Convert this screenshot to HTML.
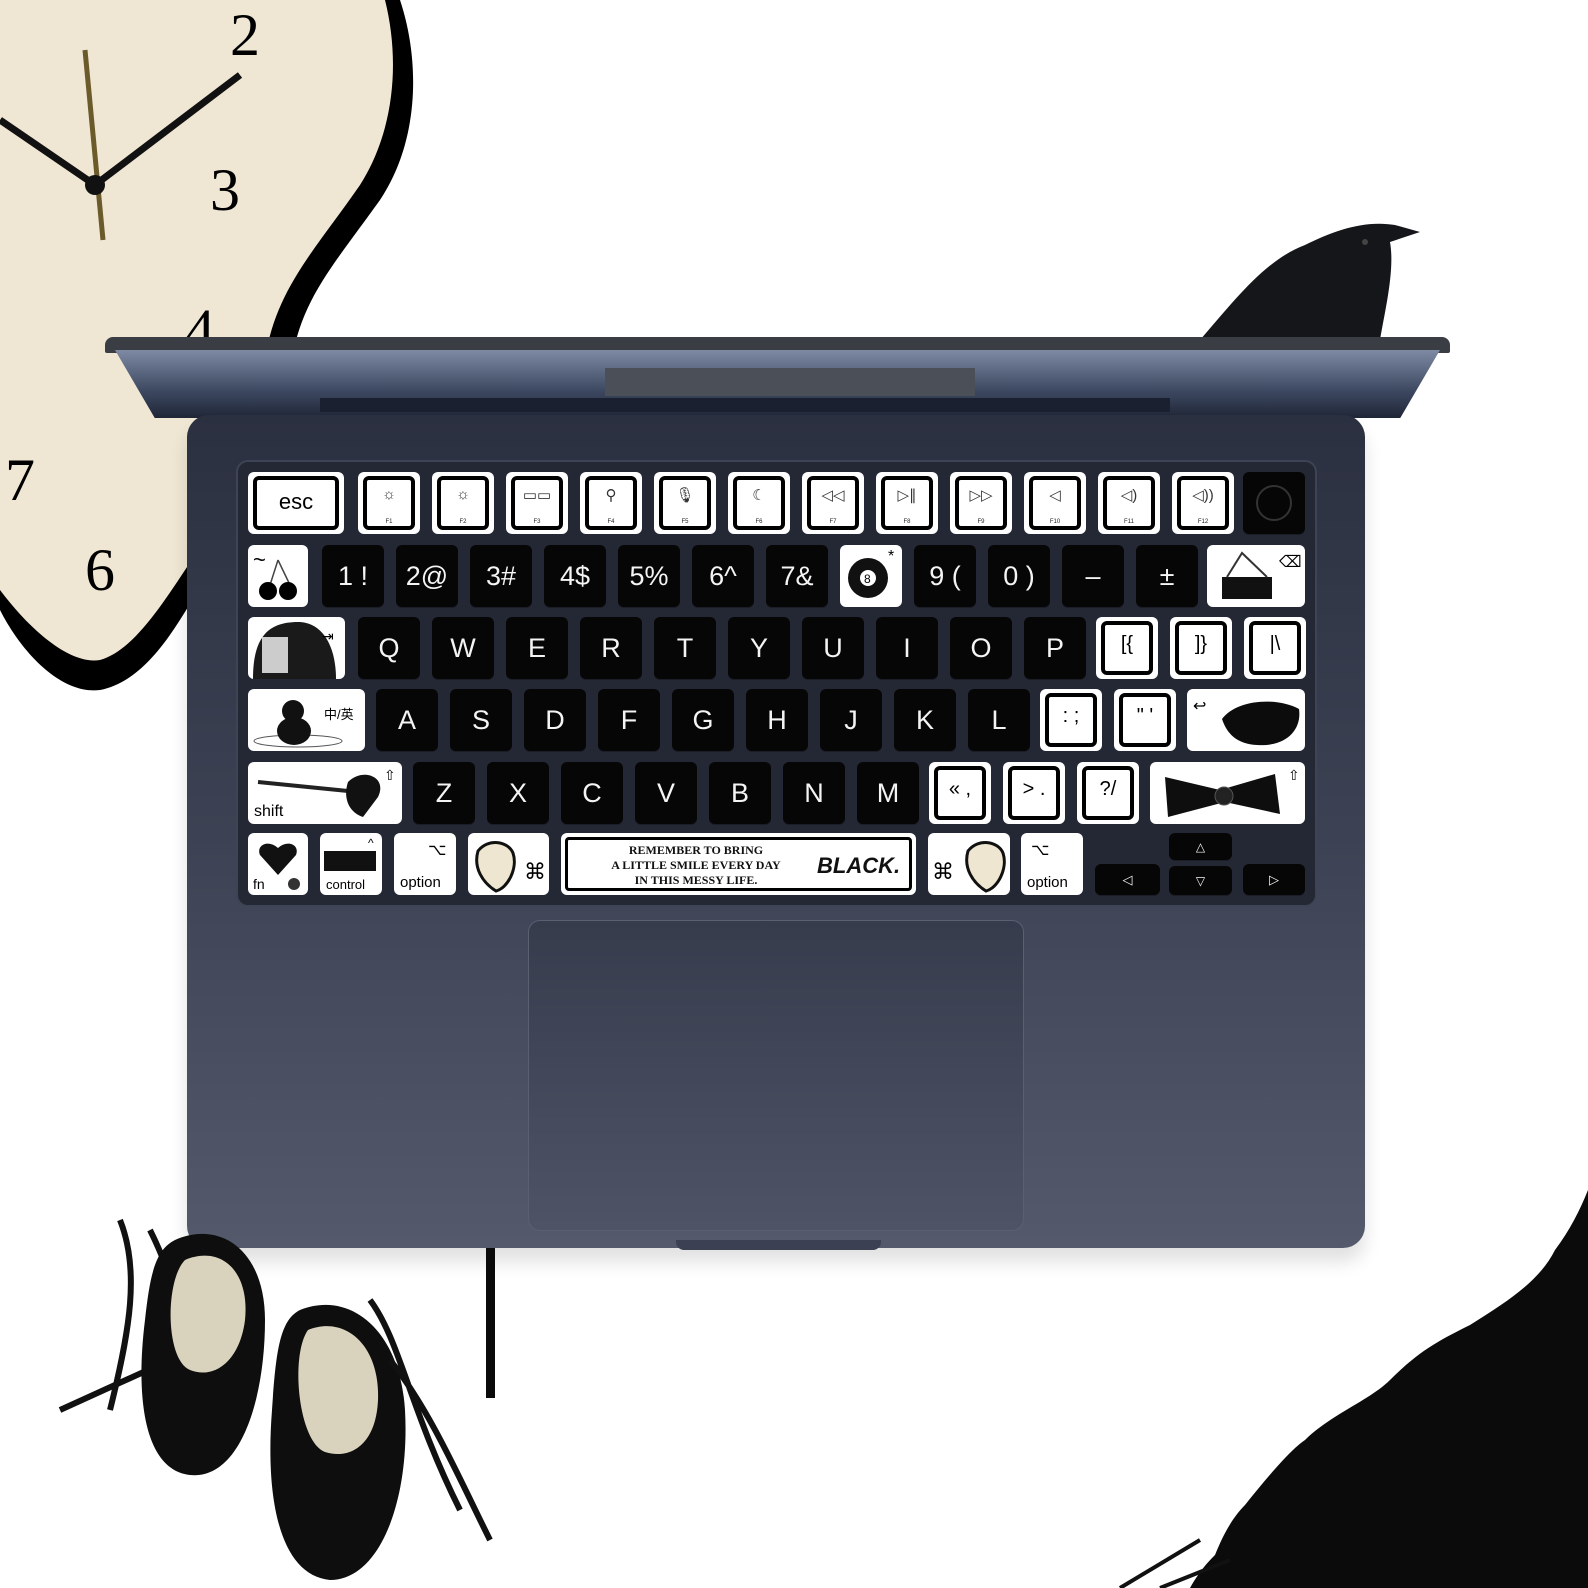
<!DOCTYPE html>
<html><head><meta charset="utf-8">
<style>
*{margin:0;padding:0;box-sizing:border-box}
body{width:1588px;height:1588px;background:#fff;position:relative;overflow:hidden;font-family:"Liberation Sans",sans-serif}
.a{position:absolute}
.k{position:absolute;background:#060606;border-radius:6px;color:#f4f4f4;display:flex;align-items:center;justify-content:center;font-size:27px;height:62px;width:62px;box-shadow:0 1px 0 #1a1d26}
.w{position:absolute;background:#fff;border-radius:6px;color:#111;height:62px;overflow:hidden}
.f{position:absolute;background:#fff;border-radius:6px;height:62px;width:62px;top:472px}
.f:before{content:"";position:absolute;left:5px;top:4px;right:5px;bottom:4px;border:4px solid #000;border-radius:6px}
.f span{position:absolute;left:0;right:0;top:14px;text-align:center;font-size:15px;color:#333}
.f i{position:absolute;left:0;right:0;bottom:9px;text-align:center;font-size:6px;font-style:normal;color:#222}
.r1{top:545px}.r2{top:617px}.r3{top:689px}.r4{top:762px}.r5{top:833px}
</style></head><body>

<!-- clock -->
<svg class="a" style="left:0;top:0" width="430" height="700">
<path d="M40 0 L400 0 C420 60 420 140 380 200 C330 270 300 300 290 370 C280 450 250 520 210 570 C180 620 150 680 100 690 C60 695 20 650 0 610 L0 0Z" fill="#000"/>
<path d="M50 0 L385 0 C400 60 395 130 360 185 C315 250 275 290 265 360 C255 440 230 505 195 555 C165 600 135 650 100 660 C70 665 30 630 0 590 L0 0Z" fill="#efe7d3"/>
<text x="230" y="55" font-size="60" font-family="Liberation Serif">2</text>
<text x="210" y="210" font-size="60" font-family="Liberation Serif">3</text>
<text x="185" y="350" font-size="60" font-family="Liberation Serif">4</text>
<text x="5" y="500" font-size="60" font-family="Liberation Serif">7</text>
<text x="85" y="590" font-size="60" font-family="Liberation Serif">6</text>
<line x1="85" y1="50" x2="103" y2="240" stroke="#6b5a2a" stroke-width="5"/>
<path d="M95 185 L240 75 M0 120 L95 185" stroke="#111" stroke-width="7"/>
<circle cx="95" cy="185" r="10" fill="#111"/>
</svg>

<!-- crow -->
<svg class="a" style="left:1195px;top:220px" width="230" height="125">
<path d="M5 120 C40 80 70 40 110 25 C140 10 170 0 200 5 L225 12 L195 22 C200 50 190 90 185 120Z" fill="#15161a"/>
<circle cx="170" cy="22" r="3" fill="#444"/>
</svg>

<!-- lid -->
<div class="a" style="left:105px;top:337px;width:1345px;height:16px;background:#3a3d44;border-radius:8px 8px 2px 2px"></div>
<div class="a" style="left:115px;top:350px;width:1325px;height:68px;background:linear-gradient(#7e8aa3,#3d4861 60%,#1f2636);clip-path:polygon(0 0,100% 0,97% 100%,3% 100%)"></div>
<div class="a" style="left:605px;top:368px;width:370px;height:28px;background:#4a4f58"></div>
<div class="a" style="left:320px;top:398px;width:850px;height:14px;background:#1b2030"></div>

<!-- body -->
<div class="a" style="left:187px;top:415px;width:1178px;height:833px;border-radius:22px;background:linear-gradient(#2b3040,#3c4253 50%,#545a6c);box-shadow:0 14px 18px rgba(0,0,0,0.12)"></div>
<div class="a" style="left:676px;top:1240px;width:205px;height:10px;background:#3b4152;border-radius:0 0 8px 8px"></div>
<div class="a" style="left:236px;top:460px;width:1081px;height:447px;border-radius:12px;background:#242834;border:2px solid #3e4455"></div>
<div class="a" style="left:528px;top:920px;width:496px;height:311px;border-radius:12px;background:linear-gradient(#363c4c,#4e5466);border:1px solid #5a6072"></div>

<!-- function row -->
<div class="f" style="left:248px;width:96px"><span style="top:17px;font-size:22px;color:#000">esc</span></div>
<div class="f" style="left:358px"><span>☼</span><i>F1</i></div>
<div class="f" style="left:432px"><span>☼</span><i>F2</i></div>
<div class="f" style="left:506px"><span>▭▭</span><i>F3</i></div>
<div class="f" style="left:580px"><span>⚲</span><i>F4</i></div>
<div class="f" style="left:654px"><span>🎙</span><i>F5</i></div>
<div class="f" style="left:728px"><span>☾</span><i>F6</i></div>
<div class="f" style="left:802px"><span>◁◁</span><i>F7</i></div>
<div class="f" style="left:876px"><span>▷∥</span><i>F8</i></div>
<div class="f" style="left:950px"><span>▷▷</span><i>F9</i></div>
<div class="f" style="left:1024px"><span>◁</span><i>F10</i></div>
<div class="f" style="left:1098px"><span>◁)</span><i>F11</i></div>
<div class="f" style="left:1172px"><span>◁))</span><i>F12</i></div>
<div class="k" style="left:1243px;top:472px"><div style="width:36px;height:36px;border-radius:50%;border:2px solid #333"></div></div>

<!-- number row -->
<div class="w r1" style="left:248px;width:60px"><svg width="60" height="62"><text x="5" y="22" font-size="22">~</text><path d="M30 15 L22 40 M30 15 L42 40" stroke="#444" stroke-width="1.5"/><circle cx="20" cy="46" r="9"/><circle cx="40" cy="46" r="9"/></svg></div>
<div class="k r1" style="left:322px">1 !</div>
<div class="k r1" style="left:396px">2@</div>
<div class="k r1" style="left:470px">3#</div>
<div class="k r1" style="left:544px">4$</div>
<div class="k r1" style="left:618px">5%</div>
<div class="k r1" style="left:692px">6^</div>
<div class="k r1" style="left:766px">7&amp;</div>
<div class="w r1" style="left:840px;width:62px"><svg width="62" height="62"><circle cx="28" cy="33" r="20" fill="#111"/><circle cx="28" cy="33" r="8" fill="#fff"/><text x="24" y="38" font-size="12">8</text><text x="48" y="16" font-size="16">*</text></svg></div>
<div class="k r1" style="left:914px">9 (</div>
<div class="k r1" style="left:988px">0 )</div>
<div class="k r1" style="left:1062px">–</div>
<div class="k r1" style="left:1136px">±</div>
<div class="w r1" style="left:1207px;width:98px"><svg width="98" height="62"><rect x="15" y="32" width="50" height="22" fill="#111"/><path d="M20 32 L35 8 L60 32" stroke="#333" fill="none" stroke-width="2"/><text x="72" y="22" font-size="16">⌫</text></svg></div>

<!-- qwerty row -->
<div class="w r2" style="left:248px;width:97px"><svg width="97" height="62"><path d="M5 62 C5 20 20 5 50 5 C75 5 88 30 88 62Z" fill="#1a1a1a"/><rect x="14" y="20" width="26" height="36" fill="#ccc"/><text x="74" y="24" font-size="14">⇥</text></svg></div>
<div class="k r2" style="left:358px">Q</div>
<div class="k r2" style="left:432px">W</div>
<div class="k r2" style="left:506px">E</div>
<div class="k r2" style="left:580px">R</div>
<div class="k r2" style="left:654px">T</div>
<div class="k r2" style="left:728px">Y</div>
<div class="k r2" style="left:802px">U</div>
<div class="k r2" style="left:876px">I</div>
<div class="k r2" style="left:950px">O</div>
<div class="k r2" style="left:1024px">P</div>
<div class="f r2" style="left:1096px;top:617px"><span style="top:16px;font-size:20px;color:#000">[{</span></div>
<div class="f r2" style="left:1170px;top:617px"><span style="top:16px;font-size:20px;color:#000">]}</span></div>
<div class="f r2" style="left:1244px;top:617px"><span style="top:16px;font-size:20px;color:#000">|\</span></div>

<!-- asdf row -->
<div class="w r3" style="left:248px;width:117px"><svg width="117" height="62"><ellipse cx="50" cy="52" rx="44" ry="6" fill="none" stroke="#555"/><circle cx="45" cy="22" r="11" fill="#111"/><ellipse cx="46" cy="42" rx="17" ry="14" fill="#111"/><text x="76" y="30" font-size="13">中/英</text></svg></div>
<div class="k r3" style="left:376px">A</div>
<div class="k r3" style="left:450px">S</div>
<div class="k r3" style="left:524px">D</div>
<div class="k r3" style="left:598px">F</div>
<div class="k r3" style="left:672px">G</div>
<div class="k r3" style="left:746px">H</div>
<div class="k r3" style="left:820px">J</div>
<div class="k r3" style="left:894px">K</div>
<div class="k r3" style="left:968px">L</div>
<div class="f r3" style="left:1040px;top:689px"><span style="top:16px;font-size:20px;color:#000">: ;</span></div>
<div class="f r3" style="left:1114px;top:689px"><span style="top:16px;font-size:20px;color:#000">" '</span></div>
<div class="w r3" style="left:1187px;width:118px"><svg width="118" height="62"><path d="M35 30 C50 10 90 8 112 20 C115 40 100 58 70 56 C50 55 40 45 35 30Z" fill="#0c0c0c"/><text x="6" y="22" font-size="16">↩</text></svg></div>

<!-- zxcv row -->
<div class="w r4" style="left:248px;width:154px"><svg width="154" height="62"><path d="M10 20 L110 30" stroke="#222" stroke-width="4"/><path d="M100 20 C115 5 140 15 130 35 L115 55 C100 50 95 35 100 20Z" fill="#111"/><text x="6" y="54" font-size="16">shift</text><text x="136" y="18" font-size="14">⇧</text></svg></div>
<div class="k r4" style="left:413px">Z</div>
<div class="k r4" style="left:487px">X</div>
<div class="k r4" style="left:561px">C</div>
<div class="k r4" style="left:635px">V</div>
<div class="k r4" style="left:709px">B</div>
<div class="k r4" style="left:783px">N</div>
<div class="k r4" style="left:857px">M</div>
<div class="f r4" style="left:929px;top:762px"><span style="top:16px;font-size:20px;color:#000">« ,</span></div>
<div class="f r4" style="left:1003px;top:762px"><span style="top:16px;font-size:20px;color:#000">&gt; .</span></div>
<div class="f r4" style="left:1077px;top:762px"><span style="top:16px;font-size:20px;color:#000">?/</span></div>
<div class="w r4" style="left:1150px;width:155px"><svg width="155" height="62"><path d="M15 15 L70 28 L125 12 L130 52 L75 40 L18 55Z" fill="#0e0e0e"/><circle cx="74" cy="34" r="9" fill="#222" stroke="#555"/><text x="138" y="18" font-size="14">⇧</text></svg></div>

<!-- bottom row -->
<div class="w r5" style="left:248px;width:60px"><svg width="60" height="62"><path d="M30 42 L12 22 C8 12 20 6 30 15 C40 6 52 12 48 22Z" fill="#111"/><text x="5" y="56" font-size="14">fn</text><circle cx="46" cy="51" r="6" fill="#333"/></svg></div>
<div class="w r5" style="left:320px;width:62px"><svg width="62" height="62"><rect x="4" y="18" width="52" height="20" fill="#111"/><text x="6" y="56" font-size="13">control</text><text x="48" y="14" font-size="12">^</text></svg></div>
<div class="w r5" style="left:394px;width:62px"><svg width="62" height="62"><text x="34" y="22" font-size="16">⌥</text><text x="6" y="54" font-size="15">option</text></svg></div>
<div class="w r5" style="left:468px;width:81px"><svg width="81" height="62"><path d="M10 18 C20 5 40 8 45 20 C50 35 40 55 28 58 C15 50 5 35 10 18Z" fill="#eee6d0" stroke="#111" stroke-width="3"/><text x="56" y="46" font-size="22">⌘</text></svg></div>
<div class="w r5" style="left:561px;width:355px"><div class="a" style="left:4px;top:4px;right:4px;bottom:4px;border:3px solid #000;border-radius:4px"></div>
<div class="a" style="left:10px;top:10px;width:250px;text-align:center;font-family:'Liberation Serif',serif;font-weight:bold;font-size:12px;line-height:15px">REMEMBER TO BRING<br>A LITTLE SMILE EVERY DAY<br>IN THIS MESSY LIFE.</div>
<div class="a" style="left:256px;top:20px;font-weight:bold;font-style:italic;font-size:22px">BLACK.</div></div>
<div class="w r5" style="left:928px;width:82px"><svg width="82" height="62"><text x="4" y="46" font-size="22">⌘</text><path d="M40 18 C50 5 70 8 75 20 C80 35 70 55 58 58 C45 50 35 35 40 18Z" fill="#eee6d0" stroke="#111" stroke-width="3"/></svg></div>
<div class="w r5" style="left:1021px;width:62px"><svg width="62" height="62"><text x="10" y="22" font-size="16">⌥</text><text x="6" y="54" font-size="15">option</text></svg></div>
<div class="k" style="left:1095px;top:864px;width:65px;height:31px;font-size:13px">◁</div>
<div class="k" style="left:1169px;top:833px;width:63px;height:27px;font-size:12px">△</div>
<div class="k" style="left:1169px;top:866px;width:63px;height:29px;font-size:12px">▽</div>
<div class="k" style="left:1243px;top:864px;width:62px;height:31px;font-size:13px">▷</div>

<!-- ribbon -->
<div class="a" style="left:486px;top:1248px;width:9px;height:150px;background:#0a0a0a"></div>

<!-- shoes -->
<svg class="a" style="left:40px;top:1210px" width="470" height="378">
<path d="M80 10 C100 60 90 120 70 200 M110 20 C140 80 150 140 160 180 M20 200 L130 150" stroke="#111" stroke-width="6" fill="none"/>
<path d="M135 30 C180 10 225 40 225 110 C225 190 200 270 150 265 C105 260 95 190 105 110 C110 65 115 40 135 30Z" fill="#0e0e0e"/>
<path d="M145 50 C180 35 210 60 205 110 C200 150 175 170 150 160 C125 150 125 70 145 50Z" fill="#d9d2bd"/>
<path d="M260 100 C310 80 360 120 365 200 C370 290 340 370 290 370 C240 365 225 290 232 200 C236 140 240 110 260 100Z" fill="#0e0e0e"/>
<path d="M268 120 C305 105 340 135 338 190 C336 235 310 250 285 242 C258 232 250 145 268 120Z" fill="#d9d2bd"/>
<path d="M350 150 C390 200 420 270 450 330 M330 90 C360 130 370 200 420 300" stroke="#111" stroke-width="6" fill="none"/>
</svg>

<!-- ink smear -->
<svg class="a" style="left:1090px;top:1180px" width="498" height="408">
<path d="M498 10 L498 408 L100 408 C110 390 120 380 125 375 C135 350 145 335 155 325 C175 300 200 270 215 260 C240 235 280 220 300 200 C330 170 350 160 380 145 C420 120 450 100 465 70 C480 50 490 30 498 10Z" fill="#0b0b0b"/>
<path d="M30 408 L110 360 M70 408 L140 380" stroke="#111" stroke-width="4"/>
</svg>
</body></html>
